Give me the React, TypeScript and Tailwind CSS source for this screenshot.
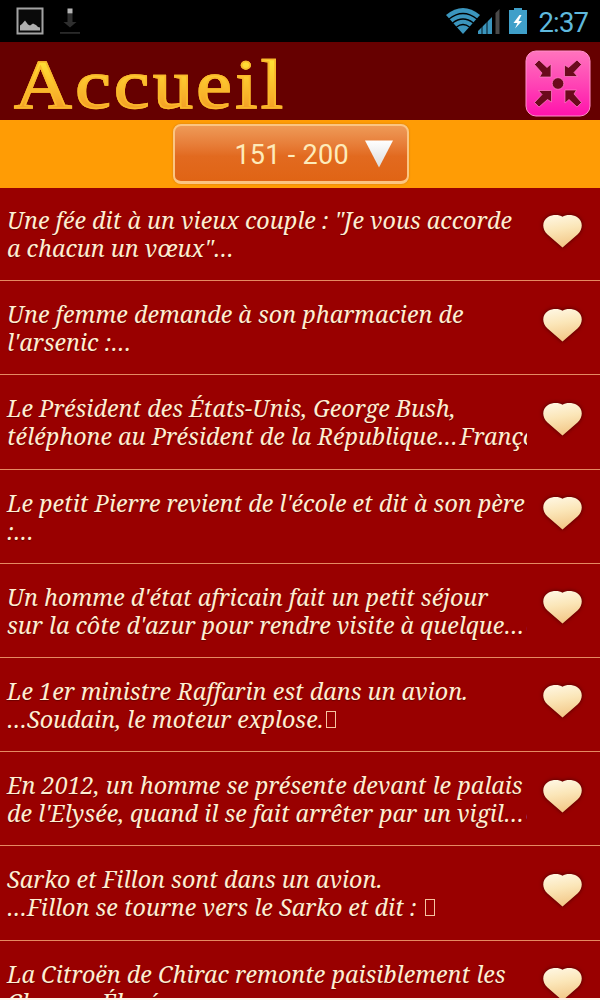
type Joke = {
  id: number;
  lines: string[];
  // start of the next sentence, runs under the right edge of the text column
  overflow?: string;
  missingGlyph?: boolean;
};

const jokes: Joke[] = [
  { id: 151, lines: ['Une fée dit à un vieux couple : "Je vous accorde', 'a chacun un vœux"…'] },
  { id: 152, lines: ["Une femme demande à son pharmacien de", "l'arsenic :…"] },
  {
    id: 153,
    lines: [
      "Le Président des États-Unis, George Bush,",
      "téléphone au Président de la République…",
    ],
    overflow: "Franço",
  },
  { id: 154, lines: ["Le petit Pierre revient de l'école et dit à son père", ":…"] },
  {
    id: 155,
    lines: [
      "Un homme d'état africain fait un petit séjour",
      "sur la côte d'azur pour rendre visite à quelque…",
    ],
    overflow: "c",
  },
  {
    id: 156,
    lines: ["Le 1er ministre Raffarin est dans un avion.", "…Soudain, le moteur explose."],
    missingGlyph: true,
  },
  {
    id: 157,
    lines: [
      "En 2012, un homme se présente devant le palais",
      "de l'Elysée, quand il se fait arrêter par un vigil…",
    ],
    overflow: "e",
  },
  {
    id: 158,
    lines: ["Sarko et Fillon sont dans un avion.", "…Fillon se tourne vers le Sarko et dit : "],
    missingGlyph: true,
  },
  { id: 159, lines: ["La Citroën de Chirac remonte paisiblement les", "Champs-Élysées."] },
];

const StatusBar = () => (
  <div className="flex h-[42px] shrink-0 items-center bg-black">
    <svg className="ml-4" width="28" height="28" viewBox="0 0 28 28">
      <rect x="1.5" y="1.5" width="25" height="25" fill="#0a0a0a" stroke="#a3a3a3" strokeWidth="2" />
      <path d="M4 23.5v-5l2-1.5 3-3.5 3 4 2 1 3-2 3 1.500 2 2 2 .5v3z" fill="#b0b0b0" />
    </svg>
    <svg className="ml-4" width="20" height="28" viewBox="0 0 20 28">
      <path d="M7.500 7h5v8h4L10 20.500 3.500 15h4z" fill="#2e2e2e" />
      <rect x="7.500" y="1.500" width="5" height="5" fill="#b5b5b5" />
      <rect x="0" y="25" width="20" height="1.800" fill="#2a2a2a" />
    </svg>
    <svg className="ml-auto" width="56" height="28" viewBox="0 0 56 28">
      <path d="M0 8Q17 -6 34 8L17 27z" fill="#3b95bd" />
      <g fill="none" stroke="#000" strokeWidth="1.300">
        <path d="M3 12Q17 1 31 12" />
        <path d="M6.500 16Q17 8 27.500 16" />
        <path d="M10.500 20Q17 15 23.500 20" />
      </g>
      <path d="M32 27v-3l3-3v6zM37 27v-8l3-3v11zM42 27V14l4-4v17z" fill="#3b95bd" />
      <path d="M35 27v-6l2-2v8zM40 27V16l2-2v13z" fill="#1f556e" />
      <path d="M49.500 27V6l4-4v25z" fill="#4a4a4a" />
    </svg>
    <svg className="ml-[7px]" width="18" height="28" viewBox="0 0 18 28">
      <path d="M5 1h8v2h5v24H0V3h5z" fill="#3f9fc9" />
      <path d="M10.500 8 4.500 16h4L6 21.500 13 14H9.500L12.500 8z" fill="#fff" />
    </svg>
    <span className="mr-3 ml-3 mt-[3px] font-[Roboto,sans-serif] text-[27.500px] leading-none tracking-[-0.900px] text-[#5fb9dd]">
      2:37
    </span>
  </div>
);

const ShrinkButton = () => (
  <button className="mr-[9px] mt-[8px] h-[67px] w-[66px]">
    <svg width="66" height="67" viewBox="0 0 66 67">
      <defs>
        <linearGradient id="pink" x1="0" y1="0" x2="0" y2="1">
          <stop offset="0" stopColor="#ff74bd" />
          <stop offset="0.500" stopColor="#ff45b5" />
          <stop offset="1" stopColor="#ff12ac" />
        </linearGradient>
      </defs>
      <rect x="1" y="1" width="64" height="65" rx="10" fill="url(#pink)" stroke="#ff8fcb" />
      <g fill="#6b0a1c" stroke="#ff86c8" strokeWidth="0.700">
        {[0, 90, 180, 270].map((angle) => (
          <path
            key={angle}
            d="M9.500 14.500 14 10 22 17.500 26 14V27H14.500L17 23z"
            transform={`rotate(${angle} 33 33.500)`}
          />
        ))}
        <circle cx="33" cy="33.500" r="5.800" />
      </g>
    </svg>
  </button>
);

const Header = () => (
  <div className="flex h-[78px] shrink-0 items-start justify-between bg-[#660000]">
    <h1 className="ml-3.5 mt-[5px] origin-left scale-x-[1.16] bg-linear-to-b from-[#ffdf35] from-20% to-[#f39b25] to-85% bg-clip-text font-['Liberation_Serif',serif] text-[69px] leading-[76px] tracking-[2.900px] text-transparent [-webkit-text-stroke:1.500px_#fbb92b]">
      Accueil
    </h1>
    <ShrinkButton />
  </div>
);

const RangePicker = () => (
  <div className="flex h-[67.500px] shrink-0 justify-center bg-[#ff9c05]">
    <button className="ml-[-18px] mt-1 flex h-[60px] w-[236px] items-center justify-end rounded-lg border-2 border-b-3 border-[#fbc582] bg-linear-to-b from-[#ee9a57] via-[#e26a1f] via-55% to-[#e06414] pr-[13px] shadow-[0_0_2px_#c9761a]">
      <span className="mt-1 font-[Roboto,sans-serif] text-[27px] leading-none tracking-[0.300px] whitespace-pre text-[#fdebba]">
        151 - 200
      </span>
      <svg className="ml-[15px]" width="30" height="28" viewBox="0 0 30 28">
        <defs>
          <linearGradient id="arrow" x1="0" y1="0" x2="0" y2="1">
            <stop offset="0" stopColor="#fff" />
            <stop offset="1" stopColor="#dcdcdc" />
          </linearGradient>
        </defs>
        <path d="M1 0.500h28L15 27.500z" fill="url(#arrow)" />
      </svg>
    </button>
  </div>
);

const Heart = () => (
  <svg
    className="mt-[25.500px] ml-[14px] shrink-0 drop-shadow-[0_0_2px_#4a0000]"
    width="43"
    height="38"
    viewBox="0 0 43 38"
  >
    <defs>
      <linearGradient id="heart" x1="0" y1="0" x2="0.200" y2="1">
        <stop offset="0" stopColor="#fff8e6" />
        <stop offset="0.500" stopColor="#fbe6b8" />
        <stop offset="1" stopColor="#f3c98a" />
      </linearGradient>
    </defs>
    <path
      d="M21.500 3.800C25 1.500 31 1.300 36 4 42.500 8.500 42 16 36.500 21.500L21.500 34.500 6.500 21.500C1 16 .5 8.500 7 4 12 1.300 18 1.500 21.500 3.800z"
      fill="url(#heart)"
    />
  </svg>
);

const JokeRow = ({ lines, overflow, missingGlyph }: Joke) => (
  <li className="flex h-[94.200px] shrink-0 items-start border-b border-[#e58a62]">
    <div className="w-[527px] overflow-hidden pt-[19px] pb-2 pl-[7px] font-['Noto_Serif',serif] text-[23.300px] leading-7 tracking-[0.020px] whitespace-pre text-[#ffeed2] italic [text-shadow:0_1px_1px_#6a0000]">
      <p>{lines[0]}</p>
      <p>
        {lines[1]}
        {overflow && <span className="ml-0.5">{overflow}</span>}
        {missingGlyph && (
          <span className="ml-0.5 inline-block h-[17px] w-2.5 border border-[#f5c4a0]" />
        )}
      </p>
    </div>
    <Heart />
  </li>
);

const App = () => {
  return (
    <div className="flex h-[1000px] w-[600px] flex-col overflow-hidden border-b-2 border-[#fff5ea] bg-[#990000]">
      <StatusBar />
      <Header />
      <RangePicker />
      <ul className="-mt-[0.500px] flex min-h-0 flex-1 flex-col overflow-hidden">
        {jokes.map((joke) => (
          <JokeRow key={joke.id} {...joke} />
        ))}
      </ul>
    </div>
  );
};

export default App;
